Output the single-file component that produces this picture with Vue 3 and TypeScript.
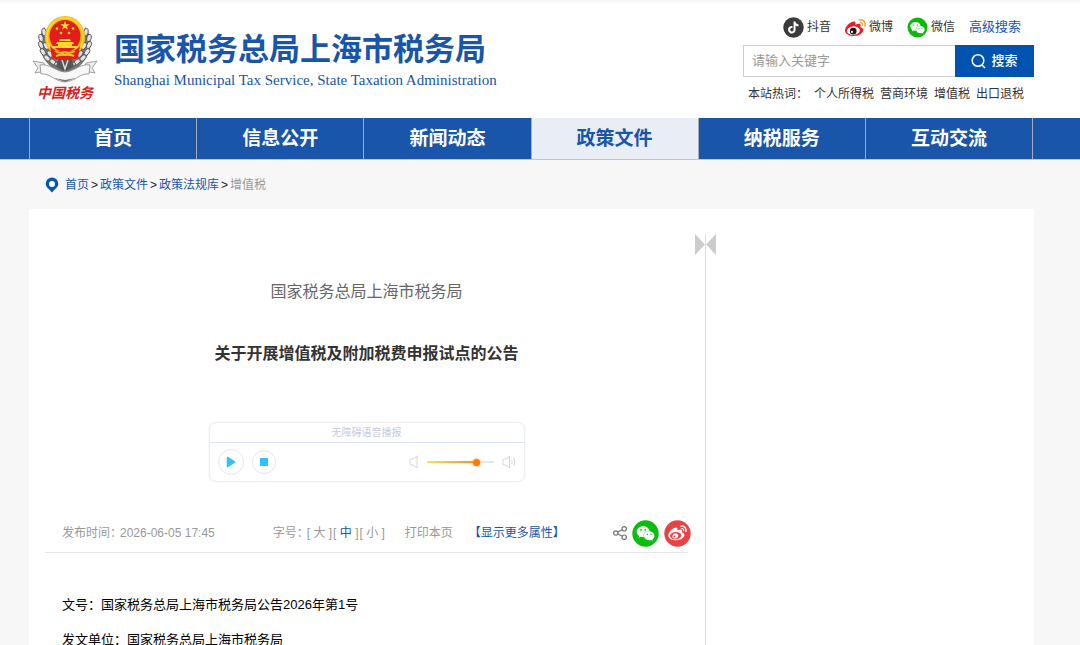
<script setup lang="ts">
import { ref } from 'vue'

interface NavItem {
  label: string
  active?: boolean
}

const navItems: NavItem[] = [
  { label: '首页' },
  { label: '信息公开' },
  { label: '新闻动态' },
  { label: '政策文件', active: true },
  { label: '纳税服务' },
  { label: '互动交流' },
]

const hotWords: string[] = ['个人所得税', '营商环境', '增值税', '出口退税']
const crumbs: string[] = ['首页', '政策文件', '政策法规库']
const sizes: string[] = ['大', '中', '小']

const keyword = ref('')
const volume = ref(78)
const fontSize = ref('中')

const grains: { x: number; y: number; r: number }[] = [
  { x: 12, y: 17, r: -10 },
  { x: 9, y: 23, r: -15 },
  { x: 9, y: 30, r: -25 },
  { x: 11, y: 37, r: -35 },
  { x: 15, y: 43, r: -45 },
  { x: 14, y: 31, r: -30 },
  { x: 18, y: 39, r: -40 },
  { x: 21, y: 47, r: -50 },
  { x: 26, y: 50, r: -60 },
]

const wechatPath =
  'M8.691 2.188C3.891 2.188 0 5.476 0 9.53c0 2.212 1.17 4.203 3.002 5.55a.59.59 0 0 1 .213.665l-.39 1.48c-.019.07-.048.141-.048.213 0 .163.13.295.29.295a.326.326 0 0 0 .167-.054l1.903-1.114a.864.864 0 0 1 .717-.098 10.16 10.16 0 0 0 2.837.403c.276 0 .543-.027.811-.05-.857-2.578.157-4.972 1.932-6.446 1.703-1.415 3.882-1.98 5.853-1.838-.576-3.583-4.196-6.348-8.596-6.348zM5.785 5.991c.642 0 1.162.529 1.162 1.18a1.17 1.17 0 0 1-1.162 1.178A1.17 1.17 0 0 1 4.623 7.17c0-.651.52-1.18 1.162-1.18zm5.813 0c.642 0 1.162.529 1.162 1.18a1.17 1.17 0 0 1-1.162 1.178 1.17 1.17 0 0 1-1.162-1.178c0-.651.52-1.18 1.162-1.18zm5.34 2.867c-1.797-.052-3.746.512-5.28 1.786-1.72 1.428-2.687 3.72-1.78 6.22.942 2.453 3.666 4.229 6.884 4.229.826 0 1.622-.12 2.361-.336a.722.722 0 0 1 .598.082l1.584.926a.272.272 0 0 0 .14.047c.134 0 .24-.111.24-.247 0-.06-.023-.12-.038-.177l-.327-1.233a.582.582 0 0 1-.023-.156.49.49 0 0 1 .201-.398C23.024 18.48 24 16.82 24 14.98c0-3.21-2.931-5.837-6.656-6.088V8.89c-.135-.01-.27-.027-.407-.03zm-2.53 3.274c.535 0 .969.44.969.982a.976.976 0 0 1-.969.983.976.976 0 0 1-.969-.983c0-.542.434-.982.97-.982zm4.844 0c.535 0 .969.44.969.982a.976.976 0 0 1-.969.983.976.976 0 0 1-.969-.983c0-.542.434-.982.969-.982z'

const weiboBody =
  'M10.098 20.323c-3.977.391-7.414-1.406-7.672-4.02-.259-2.609 2.759-5.047 6.74-5.441 3.979-.394 7.413 1.404 7.671 4.018.259 2.6-2.759 5.049-6.737 5.439zM9.05 17.219c-.384.616-1.208.884-1.829.602-.612-.279-.793-.991-.406-1.593.379-.595 1.176-.861 1.793-.601.622.263.82.972.442 1.592zm1.27-1.627c-.141.237-.449.353-.689.253-.236-.09-.313-.361-.177-.586.138-.227.436-.346.672-.24.239.09.315.36.18.601zm.176-2.719c-1.893-.493-4.033.45-4.857 2.118-.836 1.704-.026 3.591 1.886 4.21 1.983.64 4.318-.341 5.132-2.179.8-1.793-.201-3.642-2.161-4.149zm7.563-1.224c-.346-.105-.57-.18-.405-.615.375-.977.42-1.804 0-2.404-.781-1.112-2.915-1.053-5.364-.03 0 0-.766.331-.571-.271.376-1.217.315-2.224-.27-2.809-1.338-1.337-4.869.045-7.888 3.08C1.309 10.87 0 13.273 0 15.348c0 3.981 5.099 6.395 10.086 6.395 6.536 0 10.888-3.801 10.888-6.82 0-1.822-1.547-2.854-2.915-3.284z'

const weiboWaves =
  'M19.967 6.557c-.766-.856-1.908-1.187-2.96-.962-.436.09-.706.511-.616.932.09.42.511.691.932.602.511-.105 1.067.044 1.442.465.376.421.466.977.316 1.473-.136.406.089.856.51.992.405.119.857-.105.992-.512.33-1.021.12-2.178-.616-2.99zM22.385 4.362c-1.576-1.757-3.905-2.419-6.054-1.968-.496.104-.812.587-.706 1.081.104.496.586.813 1.082.707 1.532-.331 3.185.15 4.296 1.383 1.112 1.246 1.429 2.943.947 4.416-.165.48.106 1.007.586 1.157.479.165.991-.104 1.157-.586.675-2.088.241-4.478-1.308-6.19z'

const notePath =
  'M12.525.02c1.31-.02 2.61-.01 3.91-.02.08 1.53.63 3.09 1.75 4.17 1.12 1.11 2.7 1.62 4.24 1.79v4.03c-1.44-.05-2.89-.35-4.2-.97-.57-.26-1.1-.59-1.62-.93-.01 2.92.01 5.84-.02 8.75-.08 1.4-.54 2.79-1.35 3.94-1.31 1.92-3.58 3.17-5.91 3.21-1.43.08-2.86-.31-4.08-1.03-2.02-1.19-3.44-3.37-3.65-5.71-.02-.5-.03-1-.01-1.49.18-1.9 1.12-3.72 2.58-4.96 1.66-1.44 3.98-2.13 6.15-1.72.02 1.48-.04 2.96-.04 4.44-.99-.32-2.15-.23-3.02.37-.63.41-1.11 1.04-1.36 1.75-.21.51-.15 1.07-.14 1.61.24 1.64 1.82 3.02 3.5 2.87 1.12-.01 2.19-.66 2.77-1.61.19-.33.4-.67.41-1.06.1-1.79.06-3.57.07-5.36.01-4.03-.01-8.05.02-12.07z'
</script>

<template>
  <div class="page">
    <header class="header">
      <a class="brand" href="#">
        <span class="emblem">
          <svg width="66" height="68" viewBox="0 0 66 68" aria-hidden="true">
            <g v-for="side in [1, -1]" :key="side" :transform="side === 1 ? '' : 'translate(66 0) scale(-1 1)'">
              <path d="M13 12C4 22 5 42 22 54l10 4V44L14 30z" fill="#777" />
              <ellipse
                v-for="(g, i) in grains"
                :key="i"
                :cx="g.x"
                :cy="g.y"
                rx="2.2"
                ry="3.8"
                fill="#e4e4e4"
                stroke="#484848"
                stroke-width="0.8"
                :transform="`rotate(${g.r} ${g.x} ${g.y})`"
              />
            </g>
            <path d="M27 43h12l3 8-9 6-9-6z" fill="#555" />
            <path d="M30 45l3 9 3-9" fill="none" stroke="#ddd" stroke-width="1.4" />
            <g stroke="#8b8b8b" stroke-width="0.8">
              <path d="M1 46l11 2 2 8-11 2 3-5z" fill="#eee" />
              <path d="M65 46l-11 2-2 8 11 2-3-5z" fill="#eee" />
              <path d="M8 50c9-2 17 7 25 7s16-9 25-7l-1 9c-9-1-13 7-24 8-11-1-15-9-24-8z" fill="#f7f7f7" />
            </g>
            <path d="M22 63l11 4 11-4-11 2z" fill="#777" />
            <ellipse cx="33" cy="22" rx="20" ry="21" fill="#f5ba12" />
            <ellipse cx="33" cy="22" rx="18" ry="19" fill="none" stroke="#ffdb38" stroke-width="1.6" />
            <ellipse cx="33" cy="21" rx="15.5" ry="16" fill="#e31d1c" />
            <path d="M18 31c5 6 10 5 15 5s10 1 15-5l-2 12c-9 3-17 3-26 0z" fill="#de2018" />
            <path d="M23 36q5 3 10 1q5 2 10-1M24 41q5-2 9-1q4-1 9 1" fill="none" stroke="#f6c324" stroke-width="2" />
            <path d="M33 6l1.2 3.3h3.4l-2.7 2.1 1 3.4-2.9-2-2.9 2 1-3.4-2.7-2.1h3.4z" fill="#ffdf2e" />
            <g fill="#ffd92b">
              <circle cx="25" cy="13.5" r="1.3" />
              <circle cx="41" cy="13.5" r="1.3" />
              <circle cx="29" cy="18" r="1.3" />
              <circle cx="37" cy="18" r="1.3" />
              <path d="M28 24h10l1 2H27zM25 27h16l1 2H24zM26 29h14v2H26zM20 31h26v2H20z" />
            </g>
          </svg>
          <span class="emblem-text">中国税务</span>
        </span>
        <span class="brand-names">
          <span class="brand-cn">国家税务总局上海市税务局</span>
          <span class="brand-en" lang="en">Shanghai Municipal Tax Service, State Taxation Administration</span>
        </span>
      </a>

      <div class="tools">
        <div class="social">
          <a class="social-link" href="#">
            <svg width="21" height="21" viewBox="0 0 21 21" aria-hidden="true">
              <circle cx="10.5" cy="10.5" r="10.2" fill="#3b3b3b" />
              <path :d="notePath" fill="#fff" transform="translate(4.3 4.4) scale(.5)" />
            </svg>
            抖音
          </a>
          <a class="social-link" href="#">
            <svg width="21" height="21" viewBox="0 0 24 24" aria-hidden="true">
              <path :d="weiboBody" fill="#e71f2d" />
              <ellipse cx="9.6" cy="15.6" rx="7" ry="4.6" fill="#fff" transform="rotate(-6 9.6 15.6)" />
              <circle cx="9.4" cy="16.2" r="3.8" fill="#191919" />
              <circle cx="8" cy="17" r="1.2" fill="#fff" />
              <path :d="weiboWaves" fill="#f7a928" />
            </svg>
            微博
          </a>
          <a class="social-link" href="#">
            <svg width="21" height="21" viewBox="0 0 21 21" aria-hidden="true">
              <circle cx="10.5" cy="10.5" r="10" fill="#09bb07" />
              <path :d="wechatPath" fill="#fff" transform="translate(3.3 3.6) scale(.6)" />
            </svg>
            微信
          </a>
          <a class="advanced" href="#">高级搜索</a>
        </div>
        <form class="search" @submit.prevent>
          <input v-model="keyword" class="search-input" type="text" placeholder="请输入关键字" aria-label="请输入关键字" />
          <button class="search-button" type="submit">
            <svg width="16" height="16" viewBox="0 0 16 16" fill="none" stroke="#fff" stroke-width="1.5" aria-hidden="true">
              <circle cx="7" cy="7.5" r="5.8" />
              <path d="M11 12l3 3" />
            </svg>
            搜索
          </button>
        </form>
        <div class="hot">
          <span class="hot-title">本站热词：</span>
          <a v-for="word in hotWords" :key="word" href="#">{{ word }}</a>
        </div>
      </div>
    </header>

    <nav class="nav">
      <div class="nav-list">
        <a v-for="item in navItems" :key="item.label" class="nav-item" :class="{ active: item.active }" href="#">{{ item.label }}</a>
      </div>
    </nav>

    <div class="breadcrumb">
      <svg width="14" height="16" viewBox="0 0 14 16" aria-hidden="true">
        <path d="M7 .5a6.3 6.3 0 0 0-6.3 6.3c0 3.5 3.8 5.8 6.3 8.7 2.5-2.9 6.3-5.2 6.3-8.7A6.3 6.3 0 0 0 7 .5z" fill="#0a56ad" />
        <circle cx="7" cy="7" r="3" fill="#fff" />
      </svg>
      <template v-for="crumb in crumbs" :key="crumb">
        <a href="#">{{ crumb }}</a>
        <span class="sep">&gt;</span>
      </template>
      <span class="current">增值税</span>
    </div>

    <main class="content">
      <article class="article">
        <p class="issuer">国家税务总局上海市税务局</p>
        <h1 class="title">关于开展增值税及附加税费申报试点的公告</h1>

        <section class="player">
          <h2 class="player-title">无障碍语音播报</h2>
          <div class="player-controls">
            <button class="round play" type="button" aria-label="播放">
              <svg width="10" height="12" viewBox="0 0 10 12"><path d="M1.5 1.5v9l7-4.5z" fill="#31c0fa" stroke="#31c0fa" stroke-width="1.5" stroke-linejoin="round" /></svg>
            </button>
            <button class="round stop" type="button" aria-label="停止">
              <svg width="8" height="8" viewBox="0 0 8 8"><rect width="8" height="8" rx="1" fill="#31c0fa" /></svg>
            </button>
            <svg class="mute" width="9" height="14" viewBox="0 0 9 14" fill="none" stroke="#d3d5de" aria-hidden="true">
              <path d="M8 1v12L4 10H2Q1 10 1 9V5Q1 4 2 4h2z" stroke-linejoin="round" />
            </svg>
            <input v-model="volume" class="volume" type="range" min="0" max="100" aria-label="音量" />
            <svg width="14" height="14" viewBox="0 0 14 14" fill="none" stroke="#d3d5de" aria-hidden="true">
              <path d="M7.5 1v12L4 10H2Q1 10 1 9V5Q1 4 2 4h2zM9.5 5q1.5 2 0 4M11.5 3q3 4 0 8" stroke-linejoin="round" />
            </svg>
          </div>
        </section>

        <div class="meta">
          <span class="meta-label">发布时间：</span>
          <time class="date" datetime="2026-06-05T17:45">2026-06-05 17:45</time>
          <span class="size-label">字号：</span>
          <span class="sizes">
            <span v-for="size in sizes" :key="size">[ <button type="button" class="size" :class="{ chosen: size === fontSize }" @click="fontSize = size">{{ size }}</button> ]</span>
          </span>
          <button class="print" type="button">打印本页</button>
          <button class="more" type="button">【显示更多属性】</button>
          <span class="share">
            <svg width="14" height="14" viewBox="0 0 14 14" fill="none" stroke="#757575" stroke-width="1.2" aria-hidden="true">
              <circle cx="2.8" cy="7" r="2.2" />
              <circle cx="11.2" cy="2.8" r="2.2" />
              <circle cx="11.2" cy="11.2" r="2.2" />
              <path d="M4.8 6l4.4-2.2M4.8 8l4.4 2.2" />
            </svg>
            <a href="#" aria-label="微信">
              <svg width="27" height="27" viewBox="0 0 27 27">
                <circle cx="13.5" cy="13.5" r="13.2" fill="#0abd0e" />
                <path :d="wechatPath" fill="#fff" transform="translate(4.7 4.6) scale(.74)" />
              </svg>
            </a>
            <a class="share-weibo" href="#" aria-label="微博">
              <svg width="27" height="27" viewBox="0 0 27 27">
                <circle cx="13.5" cy="13.5" r="13.2" fill="#e94244" />
                <g fill="#fff" transform="translate(4.3 3.6) scale(.77)">
                  <path :d="weiboBody" />
                  <path :d="weiboWaves" />
                </g>
              </svg>
            </a>
          </span>
        </div>

        <div class="body">
          <p>文号：国家税务总局上海市税务局公告2026年第1号</p>
          <p>发文单位：国家税务总局上海市税务局</p>
        </div>
      </article>

      <aside class="side">
        <button class="toggle" type="button" aria-label="展开侧栏">
          <svg width="21" height="21" viewBox="0 0 21 21"><path d="M0 0l10 10.5L0 21zM21 0L11 10.5 21 21z" fill="#ccc" /></svg>
        </button>
      </aside>
    </main>
  </div>
</template>

<style>
body {
  margin: 0;
  background: #f7f7f7;
}
</style>

<style scoped>
.page {
  display: flex;
  flex-direction: column;
  min-height: 100vh;
  font-family: "Liberation Sans", "Noto Sans CJK SC", sans-serif;
  font-size: 12px;
  line-height: 20px;
  color: #333;
}

a {
  color: inherit;
  text-decoration: none;
}

button {
  padding: 0;
  border: 0;
  background: none;
  font: inherit;
  color: inherit;
  cursor: pointer;
}

svg {
  display: block;
  flex: none;
}

.header {
  display: flex;
  justify-content: space-between;
  box-sizing: border-box;
  min-height: 118px;
  padding: 12px 46px 0 32px;
  border-top: 3px solid #f7f7f7;
  background: #fff;
}

.brand {
  display: flex;
  gap: 16px;
}

.emblem {
  display: flex;
  flex-direction: column;
  align-items: center;
}

.emblem-text {
  font-size: 14px;
  font-style: italic;
  font-weight: 700;
  line-height: 20px;
  color: #d8201c;
}

.brand-names {
  display: flex;
  flex-direction: column;
  padding-top: 15px;
  color: #1955a8;
  white-space: nowrap;
}

.brand-cn {
  font-size: 31px;
  font-weight: 700;
  line-height: 40px;
}

.brand-en {
  font-family: "Liberation Serif", serif;
  font-size: 15px;
  line-height: 20px;
}

.tools {
  flex: 0 0 291px;
}

.social {
  display: flex;
  align-items: center;
  justify-content: flex-end;
  gap: 14px;
  height: 24px;
  padding-right: 13px;
}

.social-link {
  display: flex;
  align-items: center;
  gap: 3px;
}

.advanced {
  font-size: 13px;
  color: #1955a8;
}

.search {
  display: flex;
  height: 32px;
  margin-top: 6px;
}

.search-input {
  flex: 1;
  min-width: 0;
  box-sizing: border-box;
  padding: 0 8px;
  border: 1px solid #ccc;
  border-right: 0;
  border-radius: 0;
  outline: 0;
  font: inherit;
  font-size: 13px;
}

.search-input::placeholder {
  color: #999;
  opacity: 1;
}

.search-button {
  display: flex;
  align-items: center;
  justify-content: center;
  gap: 4px;
  width: 79px;
  background: #0053ae;
  font-size: 13px;
  font-weight: 500;
  color: #fff;
}

.hot {
  display: flex;
  gap: 6px;
  margin-top: 7px;
  padding-left: 5px;
  white-space: nowrap;
}

.nav {
  padding: 0 47px 0 29px;
  border-bottom: 1px solid #b3c8e4;
  background: #1955a8;
}

.nav-list {
  display: grid;
  grid-template-columns: repeat(6, 1fr);
  border-left: 1px solid #a5acb8;
}

.nav-item {
  border-right: 1px solid #a5acb8;
  font-size: 19px;
  font-weight: 700;
  line-height: 41px;
  text-align: center;
  color: #fff;
}

.nav-item.active {
  background: #e8edf6;
  color: #1955a8;
}

.breadcrumb {
  display: flex;
  align-items: center;
  gap: 2px;
  height: 49px;
  padding-left: 45px;
  color: #999;
}

.breadcrumb svg {
  margin-right: 4px;
}

.breadcrumb a {
  color: #1955a8;
}

.sep {
  color: #222;
}

.content {
  display: grid;
  flex: 1;
  grid-template-columns: 676fr 329fr;
  margin: 0 46px 0 29px;
  background: #fff;
}

.article {
  padding: 69px 17px 0 16px;
}

.issuer {
  margin: 0;
  font-size: 16px;
  line-height: 28px;
  text-align: center;
  color: #666;
}

.title {
  margin: 34px 0 0;
  font-size: 16px;
  font-weight: 700;
  line-height: 28px;
  text-align: center;
  color: #333;
}

.player {
  box-sizing: border-box;
  width: 316px;
  margin: 54px auto 0;
  border: 1px solid #eee;
  border-radius: 8px;
  box-shadow: 0 0 2px #e6e6e6;
}

.player-title {
  margin: 0;
  padding-top: 1px;
  border-bottom: 1px solid #dbe4f2;
  font-size: 10px;
  font-weight: 400;
  line-height: 18px;
  text-align: center;
  color: #c6cadb;
}

.player-controls {
  display: flex;
  align-items: center;
  height: 38px;
  padding: 0 8px;
}

.round {
  display: flex;
  align-items: center;
  justify-content: center;
  box-sizing: border-box;
  border: 1px solid #e6e6f0;
  border-radius: 50%;
}

.play {
  width: 26px;
  height: 26px;
}

.stop {
  width: 24px;
  height: 24px;
  margin-left: 8px;
}

.mute {
  margin-left: auto;
}

.volume {
  width: 67px;
  height: 12px;
  margin: 0 8px 0 9px;
  appearance: none;
  background: linear-gradient(90deg, #fbe34a, #ff8a1c 51px, #e3e6ee 51px) center / 100% 2px no-repeat;
}

.volume::-webkit-slider-thumb {
  width: 7px;
  height: 7px;
  appearance: none;
  border-radius: 50%;
  background: #ff7a00;
  box-shadow: 0 0 3px #ff9a3c;
}

.meta {
  display: flex;
  align-items: center;
  height: 38px;
  margin-top: 32px;
  padding-left: 17px;
  border-bottom: 1px solid #e6e6e6;
  color: #999;
  white-space: nowrap;
}

.meta-label {
  width: 58px;
}

.size-label {
  width: 34px;
  margin-left: 58px;
}

.sizes {
  display: flex;
  gap: 1px;
}

.chosen,
.more {
  color: #1955a8;
}

.print {
  margin-left: 20px;
}

.more {
  margin-left: 16px;
}

.share {
  display: flex;
  align-items: center;
  gap: 5px;
  margin: 0 -3px 0 auto;
}

.body {
  padding: 34px 17px 12px;
  font-size: 13px;
  color: #000;
}

.body p {
  margin: 0;
  line-height: 35px;
}

.side {
  margin-top: 25px;
  border-left: 1px solid #ddd;
}

.toggle {
  margin-left: -11px;
}
</style>
